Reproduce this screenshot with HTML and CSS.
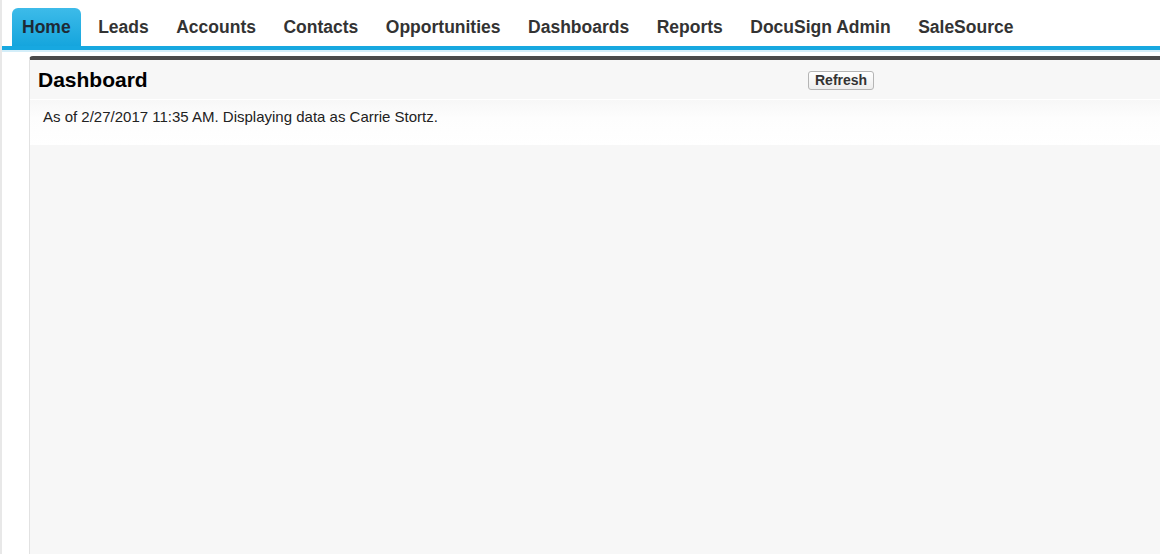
FILE: index.html
```html
<!DOCTYPE html>
<html lang="en">
<head>
    <meta charset="UTF-8">
    <title>Home</title>
    <link rel="stylesheet" href="styles.css">
</head>
<body>
    <div class="page">
        <nav class="tab-bar">
            <ul class="tabs">
                <li class="tab current">Home</li>
                <li class="tab">Leads</li>
                <li class="tab">Accounts</li>
                <li class="tab">Contacts</li>
                <li class="tab">Opportunities</li>
                <li class="tab">Dashboards</li>
                <li class="tab">Reports</li>
                <li class="tab">DocuSign Admin</li>
                <li class="tab">SaleSource</li>
            </ul>
        </nav>
        <main class="content">
            <div class="panel">
                <div class="panel-header">
                    <h2 class="panel-title">Dashboard</h2>
                    <div><button class="btn">Refresh</button></div>
                </div>
                <div class="panel-info">As of 2/27/2017 11:35 AM. Displaying data as Carrie Stortz.</div>
                <div class="panel-body"></div>
            </div>
        </main>
    </div>
</body>
</html>
```
FILE: styles.css
```css
body {
    margin: 0;
    padding: 0;
    background-color: #fff;
    font-family: "Liberation Sans", Arial, sans-serif;
    overflow: hidden;
}
.page {
    border-left: 2px solid #e8e8e8;
    min-height: 554px;
}
.tab-bar {
    border-bottom: 4px solid #17a8e0;
    box-shadow: 0 2px 0 #d4eef9;
}
.tabs {
    list-style: none;
    margin: 0;
    padding: 8px 0 0 10px;
    display: flex;
    gap: 7.5px;
}
.tab {
    padding: 9px 10px 9px;
    font-size: 17.5px;
    line-height: 20px;
    font-weight: bold;
    color: #333;
}
.tab.current {
    background: linear-gradient(#3dbbe9, #15a5dd);
    border-radius: 6px 6px 0 0;
    color: #1e2a36;
}
.content {
    padding: 6px 0 0 27px;
}
.panel {
    background-color: #f7f7f7;
    border-top: 4px solid #4a4a4a;
    border-left: 1px solid #e2e2e2;
    border-radius: 4px 0 0 0;
    min-height: 520px;
}
.panel-header {
    display: grid;
    grid-template-columns: 770px auto;
    align-items: center;
    height: 39px;
    padding-left: 8px;
    border-bottom: 1px solid #fff;
}
.panel-title {
    margin: 0;
    font-size: 21px;
    font-weight: bold;
    color: #000;
}
.btn {
    font-family: "Liberation Sans", Arial, sans-serif;
    font-size: 14px;
    font-weight: bold;
    color: #333;
    padding: 0 6px;
    height: 19px;
    line-height: 15px;
    border: 1px solid #b5b5b5;
    border-radius: 3px;
    background: linear-gradient(#fff, #ededed);
    margin-top: 1px;
}
.panel-info {
    padding: 8px 0 0 13px;
    height: 37px;
    font-size: 15px;
    line-height: 17px;
    color: #222;
    background: linear-gradient(#f7f7f7, #fdfdfd 40%, #fff);
}
.panel-body {
    min-height: 400px;
}
```
